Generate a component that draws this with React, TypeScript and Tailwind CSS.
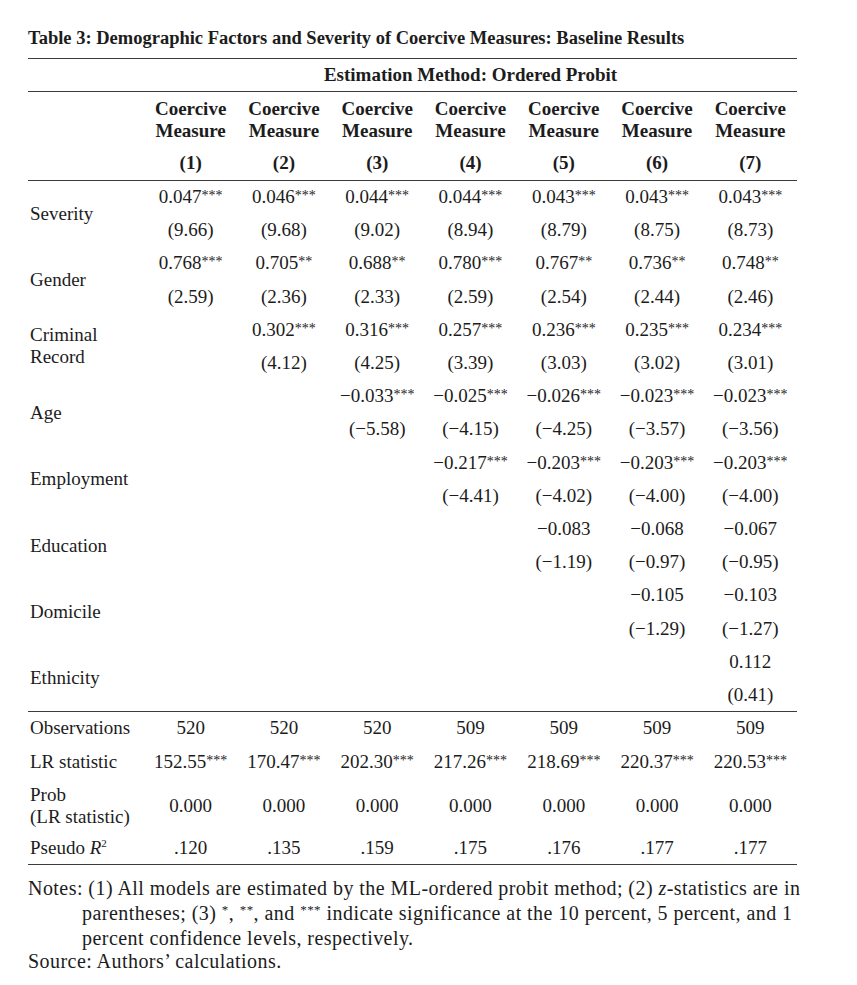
import React from "react";

const cols = ["(1)", "(2)", "(3)", "(4)", "(5)", "(6)", "(7)"];

const vars: { label: string[]; coef: string[]; z: string[] }[] = [
  {
    label: ["Severity"],
    coef: ["0.047***", "0.046***", "0.044***", "0.044***", "0.043***", "0.043***", "0.043***"],
    z: ["(9.66)", "(9.68)", "(9.02)", "(8.94)", "(8.79)", "(8.75)", "(8.73)"],
  },
  {
    label: ["Gender"],
    coef: ["0.768***", "0.705**", "0.688**", "0.780***", "0.767**", "0.736**", "0.748**"],
    z: ["(2.59)", "(2.36)", "(2.33)", "(2.59)", "(2.54)", "(2.44)", "(2.46)"],
  },
  {
    label: ["Criminal", "Record"],
    coef: ["", "0.302***", "0.316***", "0.257***", "0.236***", "0.235***", "0.234***"],
    z: ["", "(4.12)", "(4.25)", "(3.39)", "(3.03)", "(3.02)", "(3.01)"],
  },
  {
    label: ["Age"],
    coef: ["", "", "−0.033***", "−0.025***", "−0.026***", "−0.023***", "−0.023***"],
    z: ["", "", "(−5.58)", "(−4.15)", "(−4.25)", "(−3.57)", "(−3.56)"],
  },
  {
    label: ["Employment"],
    coef: ["", "", "", "−0.217***", "−0.203***", "−0.203***", "−0.203***"],
    z: ["", "", "", "(−4.41)", "(−4.02)", "(−4.00)", "(−4.00)"],
  },
  {
    label: ["Education"],
    coef: ["", "", "", "", "−0.083", "−0.068", "−0.067"],
    z: ["", "", "", "", "(−1.19)", "(−0.97)", "(−0.95)"],
  },
  {
    label: ["Domicile"],
    coef: ["", "", "", "", "", "−0.105", "−0.103"],
    z: ["", "", "", "", "", "(−1.29)", "(−1.27)"],
  },
  {
    label: ["Ethnicity"],
    coef: ["", "", "", "", "", "", "0.112"],
    z: ["", "", "", "", "", "", "(0.41)"],
  },
];

function Val({ v }: { v: string }) {
  const m = v.match(/^([^*]*)(\**)$/);
  const num = m ? m[1] : v;
  const stars = m ? m[2] : "";
  return (
    <>
      {num}
      {stars && <span className="relative -top-[3px] text-[14px] leading-none">{stars}</span>}
    </>
  );
}

export default function App() {
  return (
    <div className="min-h-screen bg-white pl-[28px] pt-[27px] font-['Liberation_Serif','Times_New_Roman',serif] text-[#1c1c1c]">
      <h1 className="text-[18.5px] font-bold leading-[22px]">
        Table 3: Demographic Factors and Severity of Coercive Measures: Baseline Results
      </h1>

      <table className="mt-[9px] w-[769px] table-fixed border-collapse text-[19px] leading-[22px]">
        <colgroup>
          <col className="w-[116px]" />
          {cols.map((c) => (
            <col key={c} />
          ))}
        </colgroup>
        <thead>
          <tr className="border-y-[1.5px] border-[#3c3c3c]">
            <th />
            <th colSpan={7} className="h-[33px] text-center font-bold">
              Estimation Method: Ordered Probit
            </th>
          </tr>
          <tr className="border-b-[1.5px] border-[#3c3c3c]">
            <th />
            {cols.map((c) => (
              <th key={c} className="pt-[6px] pb-[6px] text-center font-bold">
                <div>Coercive</div>
                <div>Measure</div>
                <div className="mt-[10px]">{c}</div>
              </th>
            ))}
          </tr>
        </thead>
        <tbody>
          {vars.map((r) => (
            <React.Fragment key={r.label.join(" ")}>
              <tr className="h-[33.2px]">
                <td rowSpan={2} className="pl-[2px] align-middle">
                  {r.label.map((l) => (
                    <div key={l}>{l}</div>
                  ))}
                </td>
                {r.coef.map((v, i) => (
                  <td key={i} className="text-center whitespace-nowrap">
                    <Val v={v} />
                  </td>
                ))}
              </tr>
              <tr className="h-[33.2px]">
                {r.z.map((v, i) => (
                  <td key={i} className="text-center whitespace-nowrap">
                    {v}
                  </td>
                ))}
              </tr>
            </React.Fragment>
          ))}
          <tr className="h-[33px] border-t-[1.5px] border-[#3c3c3c]">
            <td className="pl-[2px]">Observations</td>
            {["520", "520", "520", "509", "509", "509", "509"].map((v, i) => (
              <td key={i} className="text-center">
                {v}
              </td>
            ))}
          </tr>
          <tr className="h-[34px]">
            <td className="pl-[2px] whitespace-nowrap">LR statistic</td>
            {["152.55***", "170.47***", "202.30***", "217.26***", "218.69***", "220.37***", "220.53***"].map(
              (v, i) => (
                <td key={i} className="text-center whitespace-nowrap">
                  <Val v={v} />
                </td>
              )
            )}
          </tr>
          <tr className="h-[54px]">
            <td className="pl-[2px] whitespace-nowrap">
              <div>Prob</div>
              <div>(LR statistic)</div>
            </td>
            {cols.map((c) => (
              <td key={c} className="text-center">
                0.000
              </td>
            ))}
          </tr>
          <tr className="h-[32px] border-b-[1.5px] border-[#3c3c3c]">
            <td className="pl-[2px]">
              Pseudo <i>R</i>
              <span className="relative -top-[7px] text-[11px] leading-none">2</span>
            </td>
            {[".120", ".135", ".159", ".175", ".176", ".177", ".177"].map((v, i) => (
              <td key={i} className="text-center">
                {v}
              </td>
            ))}
          </tr>
        </tbody>
      </table>

      {/* notes */}
      <div className="mt-[11px] text-[20px] leading-[25px] tracking-[0.45px] whitespace-nowrap">
        <p>
          Notes: (1) All models are estimated by the ML-ordered probit method; (2) <i>z</i>-statistics are in
        </p>
        <p className="pl-[54px]">
          parentheses; (3) <sup className="text-[13px]">*</sup>, <sup className="text-[13px]">**</sup>, and{" "}
          <sup className="text-[13px]">***</sup> indicate significance at the 10 percent, 5 percent, and 1
        </p>
        <p className="pl-[54px]">percent confidence levels, respectively.</p>
        <p className="-mt-[2px]">Source: Authors’ calculations.</p>
      </div>
    </div>
  );
}
